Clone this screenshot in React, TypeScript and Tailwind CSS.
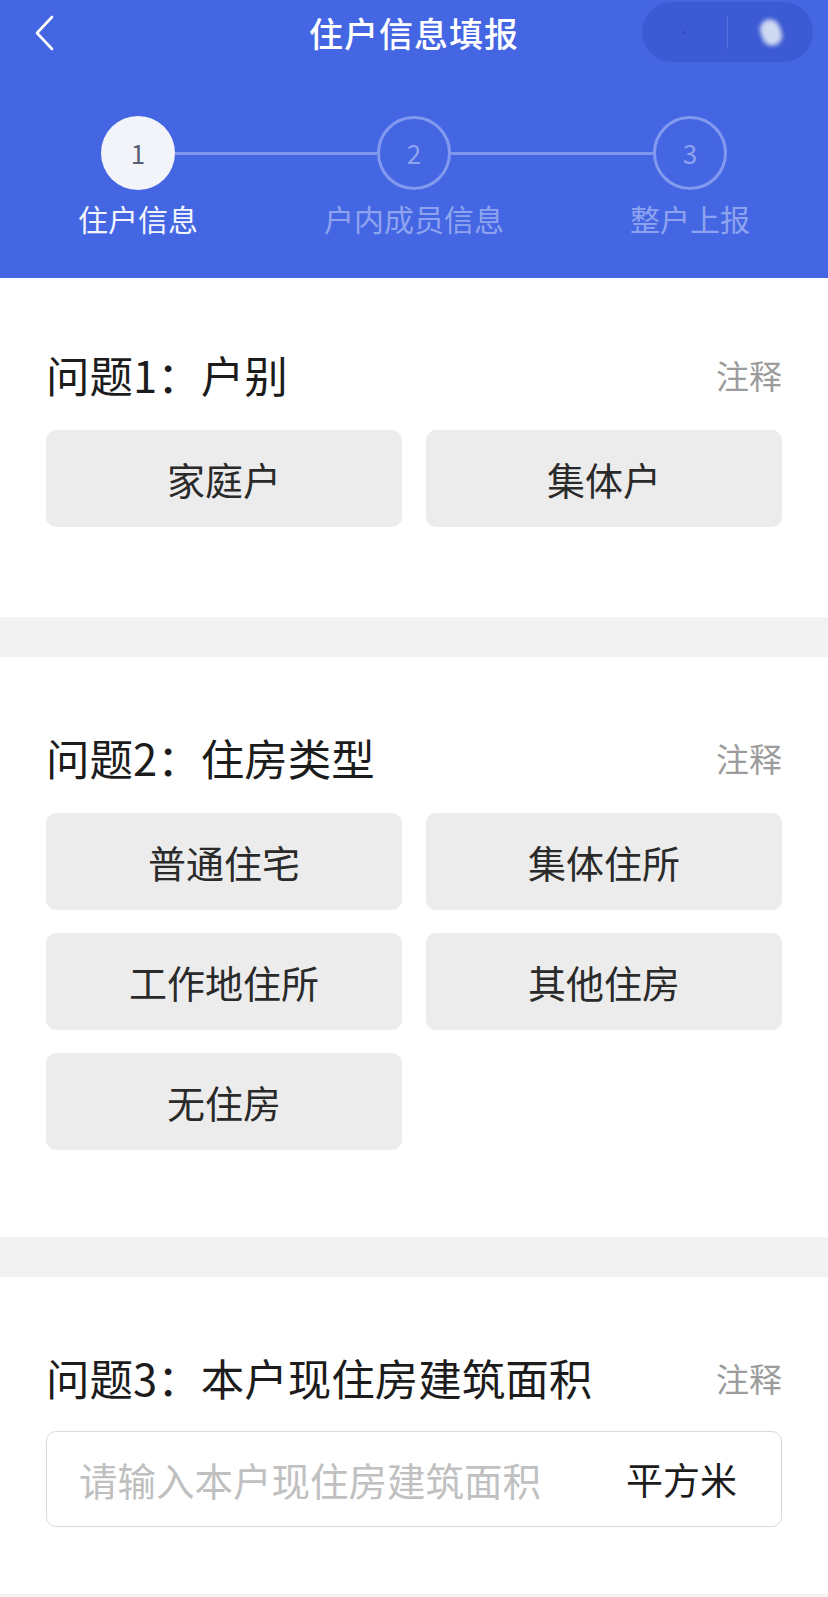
import React from 'react';

const FONT = { fontFamily: '"Noto Sans CJK SC", "Noto Sans", sans-serif' };

const steps = [
  { id: 1, label: '住户信息', active: true },
  { id: 2, label: '户内成员信息', active: false },
  { id: 3, label: '整户上报', active: false },
];

const Header: React.FC = () => (
  <header className="h-[278px] bg-[#4466e3] flex flex-col">
    <div className="h-[66px] grid grid-cols-[1fr_auto_1fr] items-center">
      <div className="pl-[33px] flex items-center">
        <svg width="22" height="36" viewBox="0 0 22 36" fill="none">
          <path d="M19 2 L4 18 L19 34" stroke="#ffffff" strokeWidth="2.6" strokeLinecap="round" strokeLinejoin="round" />
        </svg>
      </div>
      <h1 className="text-white text-[34px] leading-none font-medium tracking-[1px]">住户信息填报</h1>
      <div className="flex justify-end pr-[15px] self-start pt-[2px]">
        {/* mini program capsule */}
        <div className="w-[171px] h-[60px] rounded-full bg-[#3b5ad3] flex items-center">
          <div className="flex-1 flex items-center justify-center">
            <span className="w-[3px] h-[3px] rounded-full bg-[#2a3f9a] opacity-60" />
          </div>
          <div className="w-px h-[33px] bg-[#5571de]" />
          <div className="flex-1 flex items-center justify-center">
            <span className="w-[20px] h-[27px] rounded-full bg-[#cfd9f2] blur-[2px] -rotate-[20deg]" />
          </div>
        </div>
      </div>
    </div>

    <div className="mt-[50px] h-[74px] px-[101px] flex items-center">
      {steps.map((s, i) => (
        <React.Fragment key={s.id}>
          {i > 0 && <div className="flex-1 h-[3px] bg-[#7f98ee]" />}
          {s.active ? (
            <div className="w-[74px] h-[74px] rounded-full bg-[#f3f4f9] flex items-center justify-center text-[26px] leading-none text-[#585f74]">
              {s.id}
            </div>
          ) : (
            <div className="w-[74px] h-[74px] rounded-full border-[3px] border-[#8299ee] flex items-center justify-center text-[26px] leading-none text-[#8ea3ef]">
              {s.id}
            </div>
          )}
        </React.Fragment>
      ))}
    </div>

    <div className="mt-[8px] h-[40px] grid grid-cols-3 items-center text-center">
      {steps.map((s) => (
        <span
          key={s.id}
          className={`text-[30px] leading-none ${s.active ? 'text-[#f2f4fc]' : 'text-[#8ea3ef]'}`}
        >
          {s.label}
        </span>
      ))}
    </div>
  </header>
);

const QuestionTitle: React.FC<{ text: string }> = ({ text }) => (
  <div className="h-[56px] flex items-center justify-between">
    <h2 className="text-[43.5px] leading-none text-[#1c1c1c]">{text}</h2>
    <span className="text-[33px] leading-none text-[#9c9c9c]">注释</span>
  </div>
);

const Option: React.FC<{ text: string }> = ({ text }) => (
  <button className="h-[97px] rounded-[10px] bg-[#ececec] flex items-center justify-center text-[38px] leading-none text-[#2a2a2a]">
    {text}
  </button>
);

const Divider: React.FC = () => <div className="h-[40px] bg-[#f2f2f2]" />;

export default function App() {
  return (
    <div className="min-h-screen bg-white" style={FONT}>
      <Header />

      <section className="px-[46px] pt-[69px] pb-[90px]">
        <QuestionTitle text="问题1：户别" />
        <div className="mt-[27px] grid grid-cols-2 gap-x-[24px] gap-y-[23px]">
          <Option text="家庭户" />
          <Option text="集体户" />
        </div>
      </section>

      <Divider />

      <section className="px-[46px] pt-[73px] pb-[87px]">
        <QuestionTitle text="问题2：住房类型" />
        <div className="mt-[27px] grid grid-cols-2 gap-x-[24px] gap-y-[23px]">
          <Option text="普通住宅" />
          <Option text="集体住所" />
          <Option text="工作地住所" />
          <Option text="其他住房" />
          <Option text="无住房" />
        </div>
      </section>

      <Divider />

      <section className="px-[46px] pt-[73px] pb-[67px]">
        <QuestionTitle text="问题3：本户现住房建筑面积" />
        <div className="mt-[25px] h-[96px] rounded-[10px] border-[1.5px] border-[#d9d9d9] flex items-center pl-[32px] pr-[44px]">
          <input
            className="flex-1 min-w-0 bg-transparent outline-none text-[38.5px] leading-none text-[#222] placeholder:text-[#c0c0c0]"
            placeholder="请输入本户现住房建筑面积"
          />
          <span className="text-[37px] leading-none text-[#1c1c1c]">平方米</span>
        </div>
      </section>

      <div className="h-[4px] bg-[#f2f2f2]" />
    </div>
  );
}
